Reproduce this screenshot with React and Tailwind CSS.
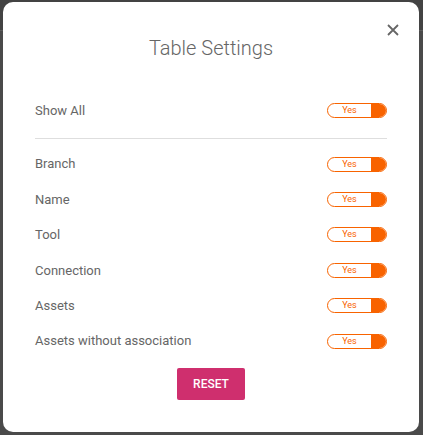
import { useState } from "react";

const ROWS = ["Branch", "Name", "Tool", "Connection", "Assets", "Assets without association"];

function Toggle({ on, onClick }) {
  return (
    <button
      type="button"
      onClick={onClick}
      className="flex h-[15px] w-[60px] overflow-hidden rounded-full border border-[#f86300] bg-white"
    >
      <span className="flex flex-1 items-center justify-center text-[9px] leading-none text-[#f86300]">
        {on ? "Yes" : "No"}
      </span>
      <span className="h-full w-[15px] bg-[#f86300]" />
    </button>
  );
}

export default function App() {
  const [values, setValues] = useState(() => Object.fromEntries(ROWS.map((r) => [r, true])));
  const allOn = ROWS.every((r) => values[r]);

  const toggleAll = () => setValues(Object.fromEntries(ROWS.map((r) => [r, !allOn])));
  const reset = () => setValues(Object.fromEntries(ROWS.map((r) => [r, true])));

  return (
    <div className="relative h-[435px] w-full overflow-hidden bg-[#4a4a4a] font-['Roboto',sans-serif]">
      {/* page behind the overlay */}
      <div className="h-[31px] border-b border-[#5c5c5c] bg-[#434343]" />

      {/* Modal */}
      <div className="absolute left-[3px] top-[2px] h-[430px] w-[416px] rounded-[10px] bg-white px-[32px]">
        <button type="button" className="absolute left-[384px] top-[22px] text-[#666]">
          <svg width="12" height="12" viewBox="0 0 12 12" fill="none" stroke="currentColor" strokeWidth="1.8">
            <path d="M1 1L11 11M11 1L1 11" />
          </svg>
        </button>

        <h2 className="pt-[34px] text-center text-[20px] font-light leading-[24px] text-[#666]">Table Settings</h2>

        <div className="mt-[32.5px] flex h-[35.5px] items-center justify-between">
          <span className="text-[13px] text-[#666]">Show All</span>
          <Toggle on={allOn} onClick={toggleAll} />
        </div>
        <div className="mt-[10px] border-t border-[#dedede]" />

        <div className="mt-[7.5px]">
          {ROWS.map((row) => (
            <div key={row} className="flex h-[35.4px] items-center justify-between">
              <span className="text-[13px] text-[#666]">{row}</span>
              <Toggle on={values[row]} onClick={() => setValues({ ...values, [row]: !values[row] })} />
            </div>
          ))}
        </div>

        <div className="mt-[9px] flex justify-center">
          <button
            type="button"
            onClick={reset}
            className="h-[32px] w-[68px] rounded-[2px] bg-[#cf2f6e] text-[12px] font-medium text-white"
          >
            RESET
          </button>
        </div>
      </div>
    </div>
  );
}
